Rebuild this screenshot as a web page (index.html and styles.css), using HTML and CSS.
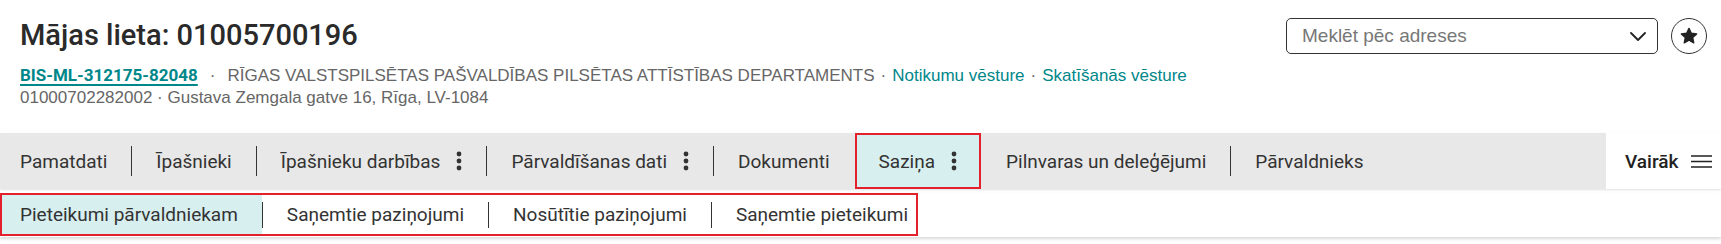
FILE: index.html
```html
<!DOCTYPE html>
<html lang="lv">
<head>
<meta charset="utf-8">
<title>Mājas lieta</title>
<link rel="stylesheet" href="styles.css">
</head>
<body>
<header class="page-header">
  <div class="header-main">
    <h1 class="title">Mājas lieta: 01005700196</h1>
    <div class="meta-line">
      <a class="case-id" href="#">BIS-ML-312175-82048</a><span class="sep sep-wide">·</span><span class="org">RĪGAS VALSTSPILSĒTAS PAŠVALDĪBAS PILSĒTAS ATTĪSTĪBAS DEPARTAMENTS</span><span class="sep">·</span><a class="link" href="#">Notikumu vēsture</a><span class="sep">·</span><a class="link" href="#">Skatīšanās vēsture</a>
    </div>
    <div class="meta-line">01000702282002 · Gustava Zemgala gatve 16, Rīga, LV-1084</div>
  </div>
  <div class="header-actions">
    <div class="select">
      <span class="placeholder">Meklēt pēc adreses</span>
      <svg class="chevron" width="16" height="9" viewBox="0 0 16 9"><polyline points="1,1 8,8 15,1" fill="none" stroke="#222" stroke-width="1.8" stroke-linecap="round" stroke-linejoin="round"/></svg>
    </div>
    <button class="fav" type="button" aria-label="Izlase">
      <svg width="20" height="20" viewBox="0 0 24 24"><path d="M12 2.8l2.8 5.9 6.4.8-4.7 4.4 1.2 6.4L12 17.1l-5.7 3.2 1.2-6.4-4.7-4.4 6.4-.8z" fill="#222" stroke="#222" stroke-width="1.6" stroke-linejoin="round"/></svg>
    </button>
  </div>
</header>

<nav class="tabs">
  <div class="tab-list">
    <a class="tab first" href="#">Pamatdati</a>
    <span class="tab-sep"></span>
    <a class="tab" href="#">Īpašnieki</a>
    <span class="tab-sep"></span>
    <a class="tab" href="#">Īpašnieku darbības<svg class="kebab" width="6" height="20" viewBox="0 0 6 20"><circle cx="3" cy="3" r="2.4"/><circle cx="3" cy="10" r="2.4"/><circle cx="3" cy="17" r="2.4"/></svg></a>
    <span class="tab-sep"></span>
    <a class="tab" href="#">Pārvaldīšanas dati<svg class="kebab" width="6" height="20" viewBox="0 0 6 20"><circle cx="3" cy="3" r="2.4"/><circle cx="3" cy="10" r="2.4"/><circle cx="3" cy="17" r="2.4"/></svg></a>
    <span class="tab-sep"></span>
    <a class="tab" href="#">Dokumenti</a>
    <span class="tab-sep hidden"></span>
    <a class="tab active marked" href="#">Saziņa<svg class="kebab" width="6" height="20" viewBox="0 0 6 20"><circle cx="3" cy="3" r="2.4"/><circle cx="3" cy="10" r="2.4"/><circle cx="3" cy="17" r="2.4"/></svg></a>
    <span class="tab-sep hidden"></span>
    <a class="tab" href="#">Pilnvaras un deleģējumi</a>
    <span class="tab-sep"></span>
    <a class="tab" href="#">Pārvaldnieks</a>
  </div>
  <div class="more">
    <span>Vairāk</span>
    <svg class="burger" width="21" height="13" viewBox="0 0 21 13"><path d="M0 1h21M0 6.5h21M0 12h21" stroke="#222" stroke-width="1.4"/></svg>
  </div>
</nav>

<nav class="subtabs">
  <div class="subtab-list marked">
    <a class="subtab first active" href="#">Pieteikumi pārvaldniekam</a>
    <span class="subtab-sep"></span>
    <a class="subtab" href="#">Saņemtie paziņojumi</a>
    <span class="subtab-sep"></span>
    <a class="subtab" href="#">Nosūtītie paziņojumi</a>
    <span class="subtab-sep"></span>
    <a class="subtab last" href="#">Saņemtie pieteikumi</a>
  </div>
</nav>
</body>
</html>
```

FILE: styles.css
```css
* { box-sizing: border-box; }

body {
  margin: 0;
  background: #fff;
  font-family: Roboto, "Liberation Sans", Arial, sans-serif;
  color: #333;
  width: 1721px;
  height: 244px;
  overflow: hidden;
}

a { text-decoration: none; color: inherit; }

/* ---------- header ---------- */
.page-header {
  display: flex;
  justify-content: space-between;
  align-items: flex-start;
  padding: 18px 14px 0 20px;
}

.title {
  margin: 0;
  font-family: Roboto, sans-serif;
  font-weight: 500;
  font-size: 29px;
  line-height: 34px;
  color: #2a2a2a;
}

.meta-line {
  font-family: "Liberation Sans", Arial, sans-serif;
  font-size: 17px;
  line-height: 22px;
  color: #666;
  white-space: nowrap;
}

.title + .meta-line { margin-top: 12px; }

.case-id {
  font-family: Roboto, sans-serif;
  font-weight: 700;
  font-size: 17px;
  color: #00878a;
  text-decoration: underline;
  text-decoration-thickness: 2px;
  text-underline-offset: 3px;
}

.sep { margin: 0 6px; }
.sep-wide { margin: 0 12px; }

.link { color: #00878a; }

.header-actions {
  display: flex;
  align-items: center;
  gap: 13px;
}

.select {
  width: 372px;
  height: 36px;
  border: 1px solid #333;
  border-radius: 5px;
  display: flex;
  align-items: center;
  justify-content: space-between;
  padding: 0 11px 0 15px;
}

.placeholder {
  font-family: "Liberation Sans", Arial, sans-serif;
  font-size: 19px;
  color: #777;
}

.fav {
  width: 36px;
  height: 36px;
  border: 1px solid #333;
  border-radius: 50%;
  background: #fff;
  padding: 0;
  display: flex;
  align-items: center;
  justify-content: center;
}

/* ---------- main tabs ---------- */
.tabs {
  margin-top: 24px;
  display: flex;
  height: 56px;
  box-shadow: 0 1px 2px rgba(0, 0, 0, 0.12);
}

.tab-list {
  flex: 1;
  display: flex;
  align-items: stretch;
  background: #e8e8e8;
}

.tab {
  display: flex;
  align-items: center;
  gap: 12px;
  padding: 0 24px;
  font-size: 19px;
  color: #333;
  white-space: nowrap;
}

.tab.first { padding-left: 20px; }

.tab.active { background: #d8eff0; }

.tab-sep {
  align-self: center;
  width: 1px;
  height: 30px;
  background: #333;
}

.tab-sep.hidden { background: transparent; }

.kebab { fill: #333; margin-left: 4px; }

.marked { outline: 2px solid #e3202b; outline-offset: -2px; }

.more {
  width: 115px;
  background: #fff;
  display: flex;
  align-items: center;
  gap: 13px;
  padding-left: 19px;
  font-size: 19px;
  font-weight: 500;
  color: #222;
}

/* ---------- sub tabs ---------- */
.subtabs {
  margin-top: 4px;
  height: 44px;
  background: #fff;
  box-shadow: 0 2px 3px rgba(0, 0, 0, 0.15);
  display: flex;
}

.subtab-list {
  display: flex;
  align-items: stretch;
  height: 43px;
}

.subtab {
  display: flex;
  align-items: center;
  padding: 0 24px;
  font-size: 19px;
  color: #333;
  white-space: nowrap;
}

.subtab.first { padding-left: 20px; }
.subtab.last { padding-right: 10px; }
.subtab.active { background: #d8eff0; }

.subtab-sep {
  align-self: center;
  width: 1px;
  height: 26px;
  background: #333;
}
```
